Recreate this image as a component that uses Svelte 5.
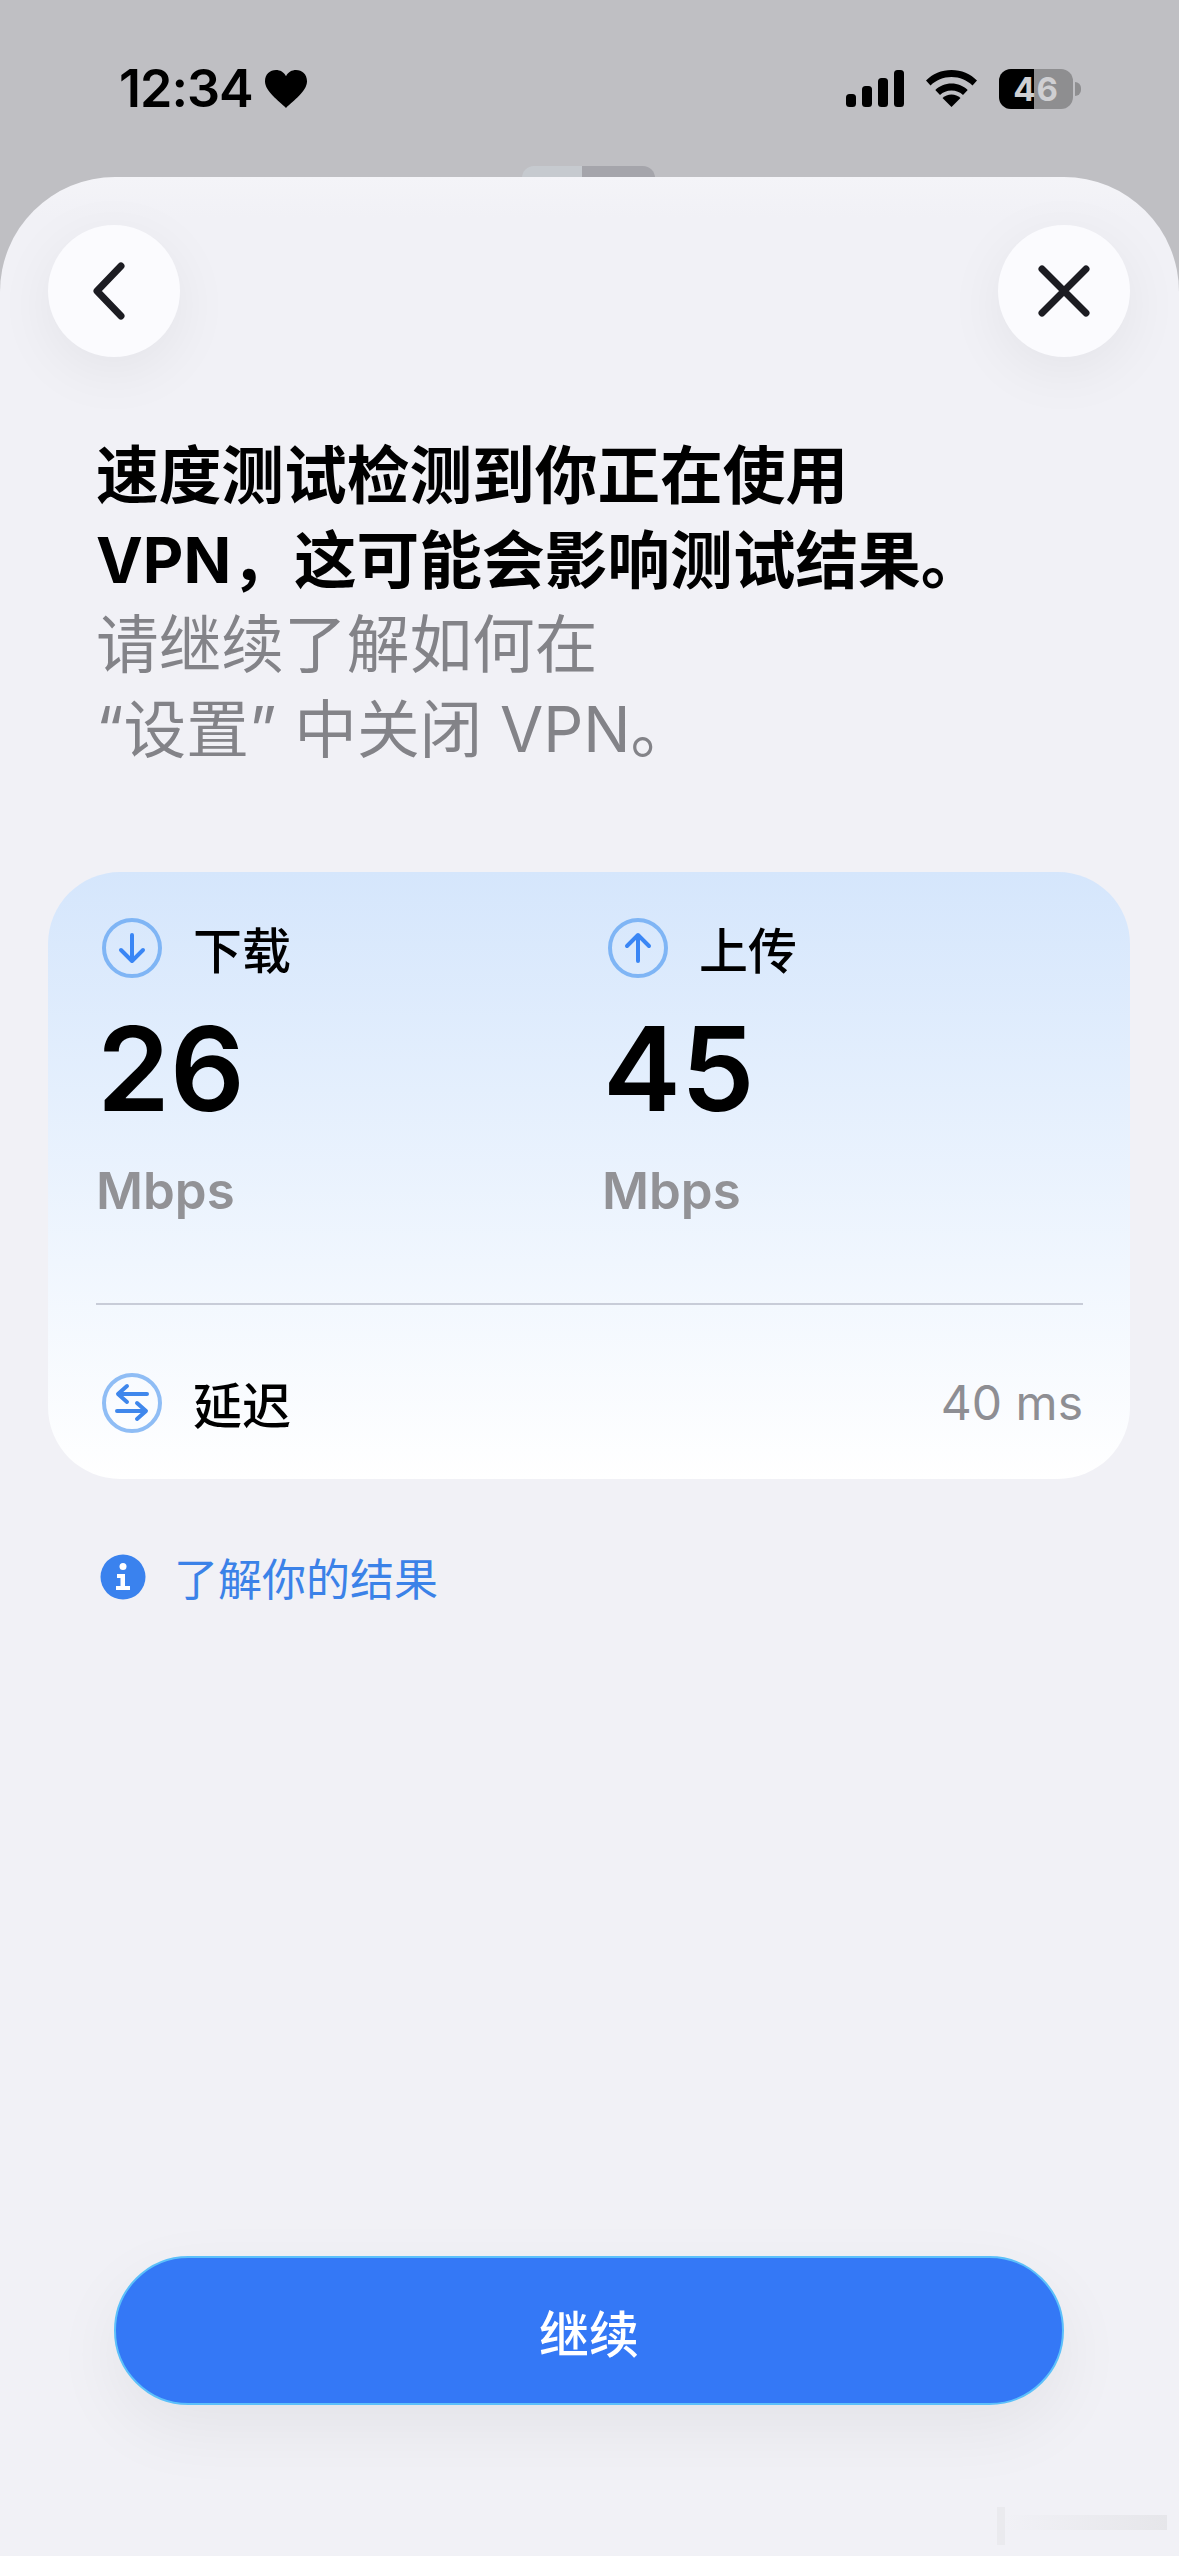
<script>
  const stats = [
    { label: "下载", value: "26", unit: "Mbps", arrow: "M30 17V42M19 32L30 43L41 32" },
    { label: "上传", value: "45", unit: "Mbps", arrow: "M30 43V18M19 28L30 17L41 28" },
  ];
</script>

<div class="screen">
  <header class="status">
    <div class="time">
      <span>12:34</span>
      <svg width="42" height="38" viewBox="0 0 42 37" preserveAspectRatio="none"><path d="M21 37C14 30 0 21 0 11C0 4 5 0 11 0C15 0 19 2 21 6C23 2 27 0 31 0C37 0 42 4 42 11C42 21 28 30 21 37Z" fill="#000" /></svg>
    </div>
    <div class="indicators">
      <svg width="58" height="37" viewBox="0 0 58 37" fill="#000">
        <rect x="0" y="24" width="10" height="13" rx="3.500" />
        <rect x="16" y="16" width="10" height="21" rx="3.500" />
        <rect x="32" y="8" width="10" height="29" rx="3.500" />
        <rect x="48" y="0" width="10" height="37" rx="3.500" />
      </svg>
      <svg width="51" height="37" viewBox="0 0 51 37" fill="#000">
        <path d="M25.500 0C35.500 0 44.500 4 51 10.500L46.500 15.500C41 10.200 33.700 7 25.500 7C17.300 7 10 10.200 4.500 15.500L0 10.500C6.500 4 15.500 0 25.500 0Z" />
        <path d="M25.500 13.500C31.800 13.500 37.500 16 41.700 20L37 25C34 22.200 30 20.500 25.500 20.500C21 20.500 17 22.200 14 25L9.300 20C13.500 16 19.200 13.500 25.500 13.500Z" />
        <path d="M25.500 37L16.500 28C19 25.700 22 24.500 25.500 24.500C29 24.500 32 25.700 34.500 28Z" />
      </svg>
      <div class="battery">
        <div class="battery-body">
          <div class="battery-fill"></div>
          <span>46</span>
        </div>
        <div class="battery-tip"></div>
      </div>
    </div>
  </header>

  <main class="sheet">
    <div class="handle"></div>

    <nav class="nav">
      <button class="round" aria-label="返回">
        <svg class="back" width="44" height="60" viewBox="0 0 44 60" fill="none" stroke="#1c1c22" stroke-width="7" stroke-linecap="round" stroke-linejoin="round">
          <path d="M33 5L9 30L33 55" />
        </svg>
      </button>
      <button class="round" aria-label="关闭">
        <svg width="56" height="56" viewBox="0 0 56 56" fill="none" stroke="#1c1c22" stroke-width="7" stroke-linecap="round">
          <path d="M6 6L50 50M50 6L6 50" />
        </svg>
      </button>
    </nav>

    <h1 class="title">
      <strong>速度测试检测到你正在使用<br />VPN，这可能会影响测试结果。</strong><br />
      <span>请继续了解如何在<br />“设置” 中关闭 VPN。</span>
    </h1>

    <section class="card">
      <div class="stats">
        {#each stats as stat}
          <div class="stat">
            <div class="row-label">
              <svg class="ring" width="60" height="60" viewBox="0 0 60 60" fill="none">
                <circle cx="30" cy="30" r="28" stroke="#7fb5f5" stroke-width="4" />
                <path d={stat.arrow} stroke="#3a86f5" stroke-width="4" stroke-linecap="round" stroke-linejoin="round" />
              </svg>
              <span class="label">{stat.label}</span>
            </div>
            <div class="value">{stat.value}</div>
            <div class="unit">{stat.unit}</div>
          </div>
        {/each}
      </div>
      <div class="divider"></div>
      <div class="latency">
        <div class="row-label">
          <svg class="ring" width="60" height="60" viewBox="0 0 60 60" fill="none">
            <circle cx="30" cy="30" r="28" stroke="#8fbdf5" stroke-width="4" />
            <path d="M45 21H17M25 13L16 21L25 29M15 38H43M35 30L44 38L35 46" stroke="#3f87ec" stroke-width="4" stroke-linecap="round" stroke-linejoin="round" />
          </svg>
          <span class="label">延迟</span>
        </div>
        <span class="ms">40 ms</span>
      </div>
    </section>

    <div class="info">
      <svg width="46" height="46" viewBox="0 0 46 46">
        <circle cx="23" cy="23" r="22.500" fill="#3a82ee" />
        <circle cx="23" cy="12.500" r="3.500" fill="#fff" />
        <path d="M17 20H25V32H30V36H16V32H20.500V24H17Z" fill="#fff" />
      </svg>
      <span>了解你的结果</span>
    </div>

    <button class="continue">继续</button>
    <div class="mark"></div>
  </main>
</div>

<style>
  :global(body) {
    margin: 0;
    background: #bfbfc3;
  }
  .screen {
    width: 1179px;
    height: 2556px;
    overflow: hidden;
    isolation: isolate;
    display: flex;
    flex-direction: column;
    background: #bfbfc3;
    font-family: Inter, "Noto Sans CJK SC", sans-serif;
  }
  .status {
    height: 177px;
    flex: none;
    display: flex;
    justify-content: space-between;
    align-items: center;
    padding: 0 98px 0 119px;
  }
  .time {
    display: flex;
    align-items: center;
    gap: 12px;
    font-size: 52px;
    font-weight: 600;
    letter-spacing: -1px;
    color: #000;
  }
  .indicators {
    display: flex;
    align-items: center;
    gap: 22px;
  }
  .battery {
    display: flex;
    align-items: center;
    gap: 2px;
  }
  .battery-body {
    position: relative;
    width: 74px;
    height: 40px;
    border-radius: 12px;
    overflow: hidden;
    background: #8e8e90;
    display: flex;
    align-items: center;
    justify-content: center;
  }
  .battery-fill {
    position: absolute;
    left: 0;
    top: 0;
    bottom: 0;
    width: 47%;
    background: #000;
  }
  .battery-body span {
    position: relative;
    font-size: 33px;
    font-weight: 700;
    letter-spacing: 1px;
    color: #cfcfd2;
  }
  .battery-tip {
    width: 6px;
    height: 14px;
    background: #8e8e90;
    border-radius: 0 7px 7px 0;
  }
  .sheet {
    position: relative;
    flex: 1;
    box-sizing: border-box;
    padding: 48px 49px 151px 48px;
    display: flex;
    flex-direction: column;
    border-radius: 115px 115px 0 0;
    background: linear-gradient(#f4f4f8, #f1f1f6 40px);
  }
  .handle {
    position: absolute;
    left: 522px;
    top: -11px;
    width: 133px;
    height: 40px;
    border-radius: 12px;
    background: linear-gradient(90deg, #c6cacf 0 45%, #a5a5ab 45%);
    z-index: -1;
  }
  .nav {
    display: flex;
    justify-content: space-between;
    margin-bottom: 76px;
  }
  .round {
    width: 132px;
    height: 132px;
    padding: 0;
    border: none;
    border-radius: 50%;
    background: #fbfbfe;
    box-shadow: 0 14px 60px rgba(0, 0, 0, 0.06);
    display: flex;
    align-items: center;
    justify-content: center;
  }
  .back {
    margin-right: 9px;
  }
  .title {
    margin: 0 0 101px;
    padding-left: 48px;
    font-size: 62.700px;
    line-height: 84.500px;
    font-weight: 400;
    color: #838388;
  }
  .title strong {
    font-weight: 700;
    color: #000;
  }
  .card {
    height: 607px;
    box-sizing: border-box;
    padding: 40px 47px 41px 50px;
    display: flex;
    flex-direction: column;
    border-radius: 72px;
    background: linear-gradient(#d5e6fc, #ffffff);
  }
  .stats {
    display: flex;
    flex: 1;
  }
  .stat {
    flex: none;
    width: 506px;
  }
  .row-label {
    display: flex;
    align-items: center;
    gap: 31px;
  }
  .ring {
    margin-left: 4px;
  }
  .label {
    font-size: 49px;
    font-weight: 500;
    color: #000;
  }
  .value {
    margin-top: 26px;
    font-size: 117px;
    line-height: 120px;
    font-weight: 600;
    color: #000;
    margin-left: -1px;
  }
  .unit {
    margin-top: 32px;
    margin-left: -2px;
    font-size: 51px;
    line-height: 60px;
    font-weight: 600;
    color: #929296;
  }
  .divider {
    height: 2px;
    margin-left: -2px;
    background: #c8ccd8;
    margin-bottom: 62px;
  }
  .latency {
    display: flex;
    justify-content: space-between;
    align-items: center;
  }
  .ms {
    font-size: 48px;
    color: #8e8e93;
  }
  .info {
    display: flex;
    align-items: center;
    gap: 28px;
    margin: 66px 0 0 52px;
    font-size: 44px;
    color: #3b82e8;
  }
  .continue {
    margin: auto 66px 0;
    height: 149px;
    box-sizing: border-box;
    border: 2px solid #5cc0fa;
    border-radius: 75px;
    background: #3478f6;
    box-shadow: 0 24px 70px rgba(0, 0, 0, 0.06);
    color: #fff;
    font-family: inherit;
    font-size: 50px;
    font-weight: 500;
  }
  .mark {
    position: absolute;
    left: 997px;
    bottom: 11px;
    width: 170px;
    height: 38px;
    border-left: 8px solid #eaeaee;
    box-sizing: border-box;
    background: linear-gradient(90deg, transparent, #e6e6ea) 0 8px / 100% 15px no-repeat;
  }
</style>
